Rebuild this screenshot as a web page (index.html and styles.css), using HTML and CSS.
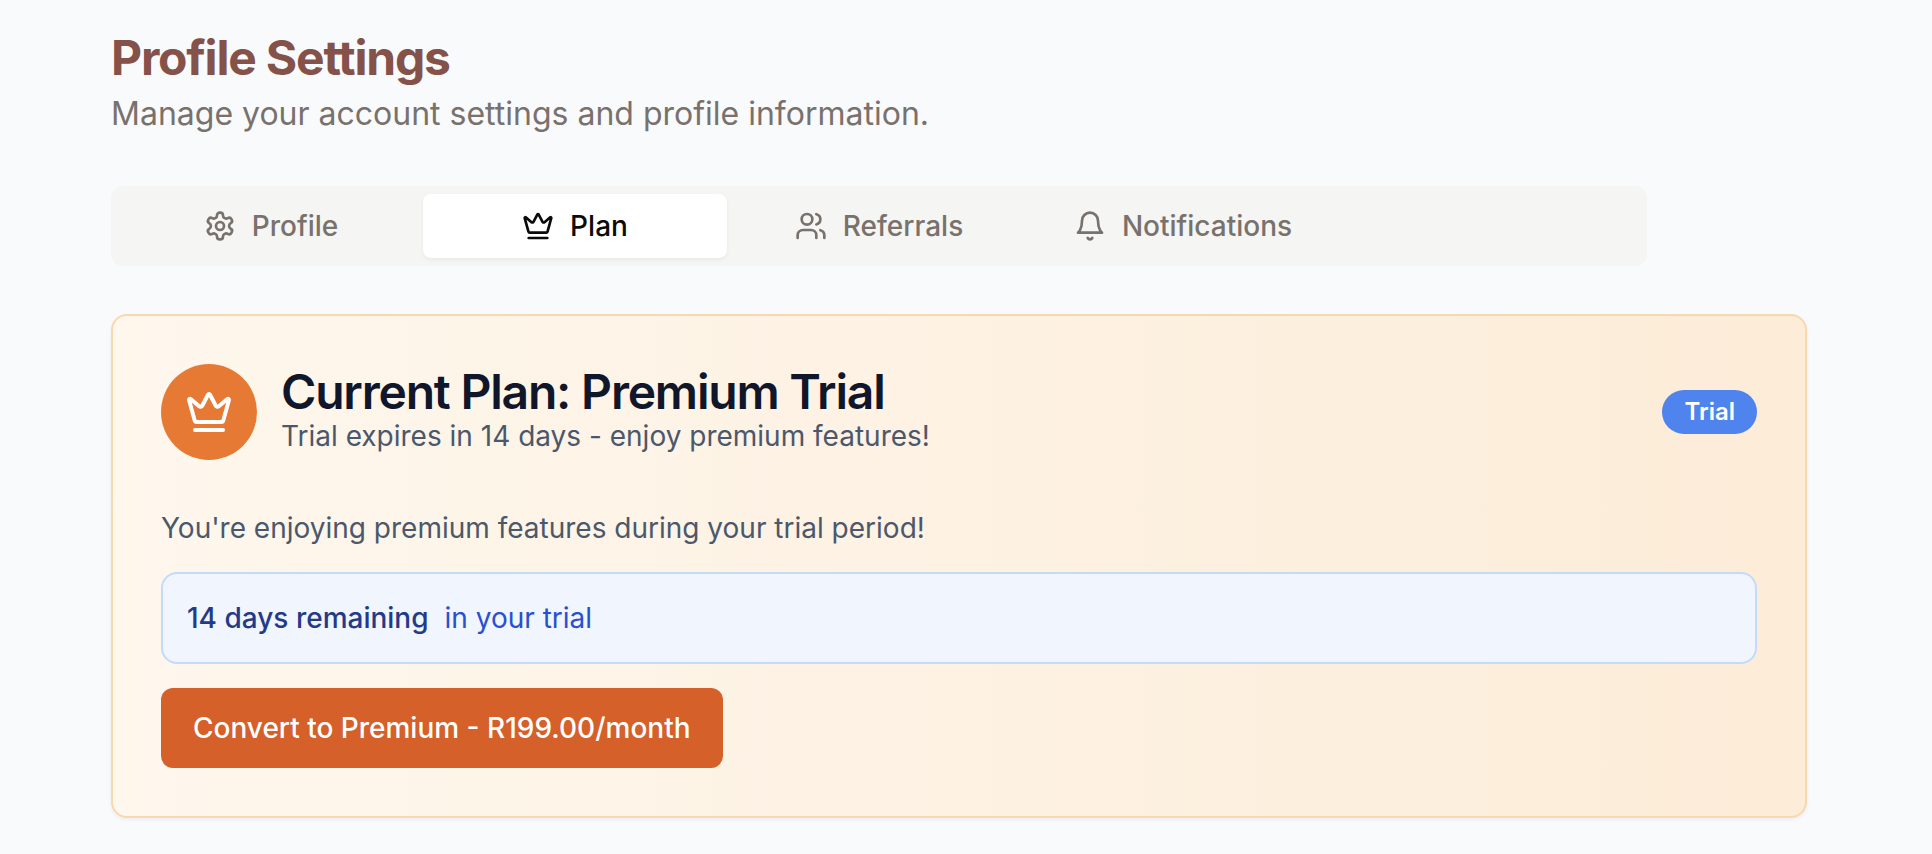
FILE: index.html
```html
<!DOCTYPE html>
<html lang="en">
<head>
<meta charset="utf-8">
<meta name="viewport" content="width=device-width, initial-scale=1">
<title>Profile Settings</title>
<link rel="stylesheet" href="styles.css">
</head>
<body>
<main class="page">
  <header class="page-header">
    <h1 class="page-title">Profile Settings</h1>
    <p class="page-subtitle">Manage your account settings and profile information.</p>
  </header>

  <div class="tabs" role="tablist" aria-label="Settings sections">
    <button class="tab" type="button" role="tab" aria-selected="false">
      <svg class="icon" viewBox="0 0 24 24" aria-hidden="true"><path d="M12.22 2h-.44a2 2 0 0 0-2 2v.18a2 2 0 0 1-1 1.73l-.43.25a2 2 0 0 1-2 0l-.15-.08a2 2 0 0 0-2.73.73l-.22.38a2 2 0 0 0 .73 2.73l.15.1a2 2 0 0 1 1 1.72v.51a2 2 0 0 1-1 1.74l-.15.09a2 2 0 0 0-.73 2.73l.22.38a2 2 0 0 0 2.73.73l.15-.08a2 2 0 0 1 2 0l.43.25a2 2 0 0 1 1 1.73V20a2 2 0 0 0 2 2h.44a2 2 0 0 0 2-2v-.18a2 2 0 0 1 1-1.73l.43-.25a2 2 0 0 1 2 0l.15.08a2 2 0 0 0 2.73-.73l.22-.39a2 2 0 0 0-.73-2.73l-.15-.08a2 2 0 0 1-1-1.74v-.5a2 2 0 0 1 1-1.74l.15-.09a2 2 0 0 0 .73-2.73l-.22-.38a2 2 0 0 0-2.73-.73l-.15.08a2 2 0 0 1-2 0l-.43-.25a2 2 0 0 1-1-1.73V4a2 2 0 0 0-2-2z"/><circle cx="12" cy="12" r="3"/></svg>
      Profile
    </button>
    <button class="tab tab-active" type="button" role="tab" aria-selected="true">
      <svg class="icon" viewBox="0 0 24 24" aria-hidden="true"><path d="M11.562 3.266a.5.5 0 0 1 .876 0L15.39 8.87a1 1 0 0 0 1.516.294L21.183 5.5a.5.5 0 0 1 .798.519l-2.834 10.246a1 1 0 0 1-.956.734H5.81a1 1 0 0 1-.957-.734L2.02 6.02a.5.5 0 0 1 .798-.519l4.276 3.664a1 1 0 0 0 1.516-.294z"/><path d="M5 21h14"/></svg>
      Plan
    </button>
    <button class="tab" type="button" role="tab" aria-selected="false">
      <svg class="icon" viewBox="0 0 24 24" aria-hidden="true"><path d="M16 21v-2a4 4 0 0 0-4-4H6a4 4 0 0 0-4 4v2"/><circle cx="9" cy="7" r="4"/><path d="M22 21v-2a4 4 0 0 0-3-3.87"/><path d="M16 3.13a4 4 0 0 1 0 7.75"/></svg>
      Referrals
    </button>
    <button class="tab" type="button" role="tab" aria-selected="false">
      <svg class="icon" viewBox="0 0 24 24" aria-hidden="true"><path d="M6 8a6 6 0 0 1 12 0c0 7 3 9 3 9H3s3-2 3-9"/><path d="M10.3 21a1.94 1.94 0 0 0 3.4 0"/></svg>
      Notifications
    </button>
  </div>

  <section class="card" aria-labelledby="plan-title">
    <div class="card-header">
      <div class="plan-badge">
        <svg class="icon icon-large" viewBox="0 0 24 24" aria-hidden="true"><path d="M11.562 3.266a.5.5 0 0 1 .876 0L15.39 8.87a1 1 0 0 0 1.516.294L21.183 5.5a.5.5 0 0 1 .798.519l-2.834 10.246a1 1 0 0 1-.956.734H5.81a1 1 0 0 1-.957-.734L2.02 6.02a.5.5 0 0 1 .798-.519l4.276 3.664a1 1 0 0 0 1.516-.294z"/><path d="M5 21h14"/></svg>
      </div>
      <div class="plan-heading">
        <h2 class="plan-title" id="plan-title">Current Plan: Premium Trial</h2>
        <p class="plan-text">Trial expires in 14 days - enjoy premium features!</p>
      </div>
      <span class="pill">Trial</span>
    </div>
    <div class="card-body">
      <p class="plan-text">You're enjoying premium features during your trial period!</p>
      <div class="notice">
        <span class="notice-strong">14 days remaining</span>
        <span>in your trial</span>
      </div>
      <button class="primary-button" type="button">Convert to Premium - R199.00/month</button>
    </div>
  </section>
</main>
</body>
</html>
```
FILE: styles.css
```css
* {
  box-sizing: border-box;
}

body {
  margin: 0;
  background: #f9fafc;
  font-family: Inter, "Liberation Sans", sans-serif;
  font-size: 28px;
  line-height: 40px;
  color: #475569;
}

h1,
h2,
p {
  margin: 0;
}

button {
  border: 0;
  font: inherit;
  cursor: pointer;
}

.page {
  padding: 26px 125px 36px 111px;
  display: flex;
  flex-direction: column;
  gap: 48px;
}

.page-title {
  font-size: 48px;
  line-height: 64px;
  font-weight: 700;
  letter-spacing: -0.025em;
  color: #85524a;
}

.page-subtitle {
  font-size: 32px;
  line-height: 48px;
  color: #78716c;
}

.tabs {
  display: grid;
  grid-template-columns: repeat(5, 1fr);
  width: 100%;
  max-width: 1536px;
  padding: 8px;
  border-radius: 12px;
  background: #f5f5f3;
}

.tab {
  display: flex;
  align-items: center;
  justify-content: center;
  gap: 16px;
  padding: 12px 24px;
  border-radius: 8px;
  background: transparent;
  font-weight: 500;
  color: #78716c;
}

.tab-active {
  background: #fff;
  color: #0c0a09;
  box-shadow: 0 2px 4px rgba(0, 0, 0, 0.05);
}

.icon {
  flex: none;
  width: 32px;
  height: 32px;
  fill: none;
  stroke: currentColor;
  stroke-width: 2;
  stroke-linecap: round;
  stroke-linejoin: round;
}

.icon-large {
  width: 48px;
  height: 48px;
}

.card {
  padding: 48px;
  border: 2px solid #f8d8ae;
  border-radius: 16px;
  background: linear-gradient(to right, #fef7ed, #fcecd8);
  box-shadow: 0 2px 4px rgba(0, 0, 0, 0.05);
}

.card-header {
  display: flex;
  align-items: center;
  gap: 24px;
  margin-bottom: 48px;
}

.plan-badge {
  display: flex;
  align-items: center;
  justify-content: center;
  flex: none;
  width: 96px;
  height: 96px;
  border-radius: 50%;
  background: #e67a35;
  color: #fff;
}

.plan-heading {
  flex: 1;
}

.plan-title {
  font-size: 48px;
  line-height: 48px;
  font-weight: 600;
  letter-spacing: -0.025em;
  color: #10172a;
}

.plan-text {
  color: #4b586b;
}

.pill {
  padding: 6px 22px;
  border-radius: 22px;
  background: #4f83ee;
  font-size: 24px;
  line-height: 32px;
  font-weight: 600;
  color: #fff;
}

.card-body {
  display: flex;
  flex-direction: column;
  align-items: flex-start;
  gap: 24px;
}

.notice {
  display: flex;
  gap: 16px;
  width: 100%;
  padding: 24px;
  border: 2px solid #c4dafb;
  border-radius: 16px;
  background: #f0f5fe;
  color: #2850d0;
}

.notice-strong {
  font-weight: 500;
  color: #253a87;
}

.primary-button {
  padding: 20px 32px;
  border-radius: 12px;
  background: #d5602a;
  font-weight: 500;
  color: #fff;
}
```
